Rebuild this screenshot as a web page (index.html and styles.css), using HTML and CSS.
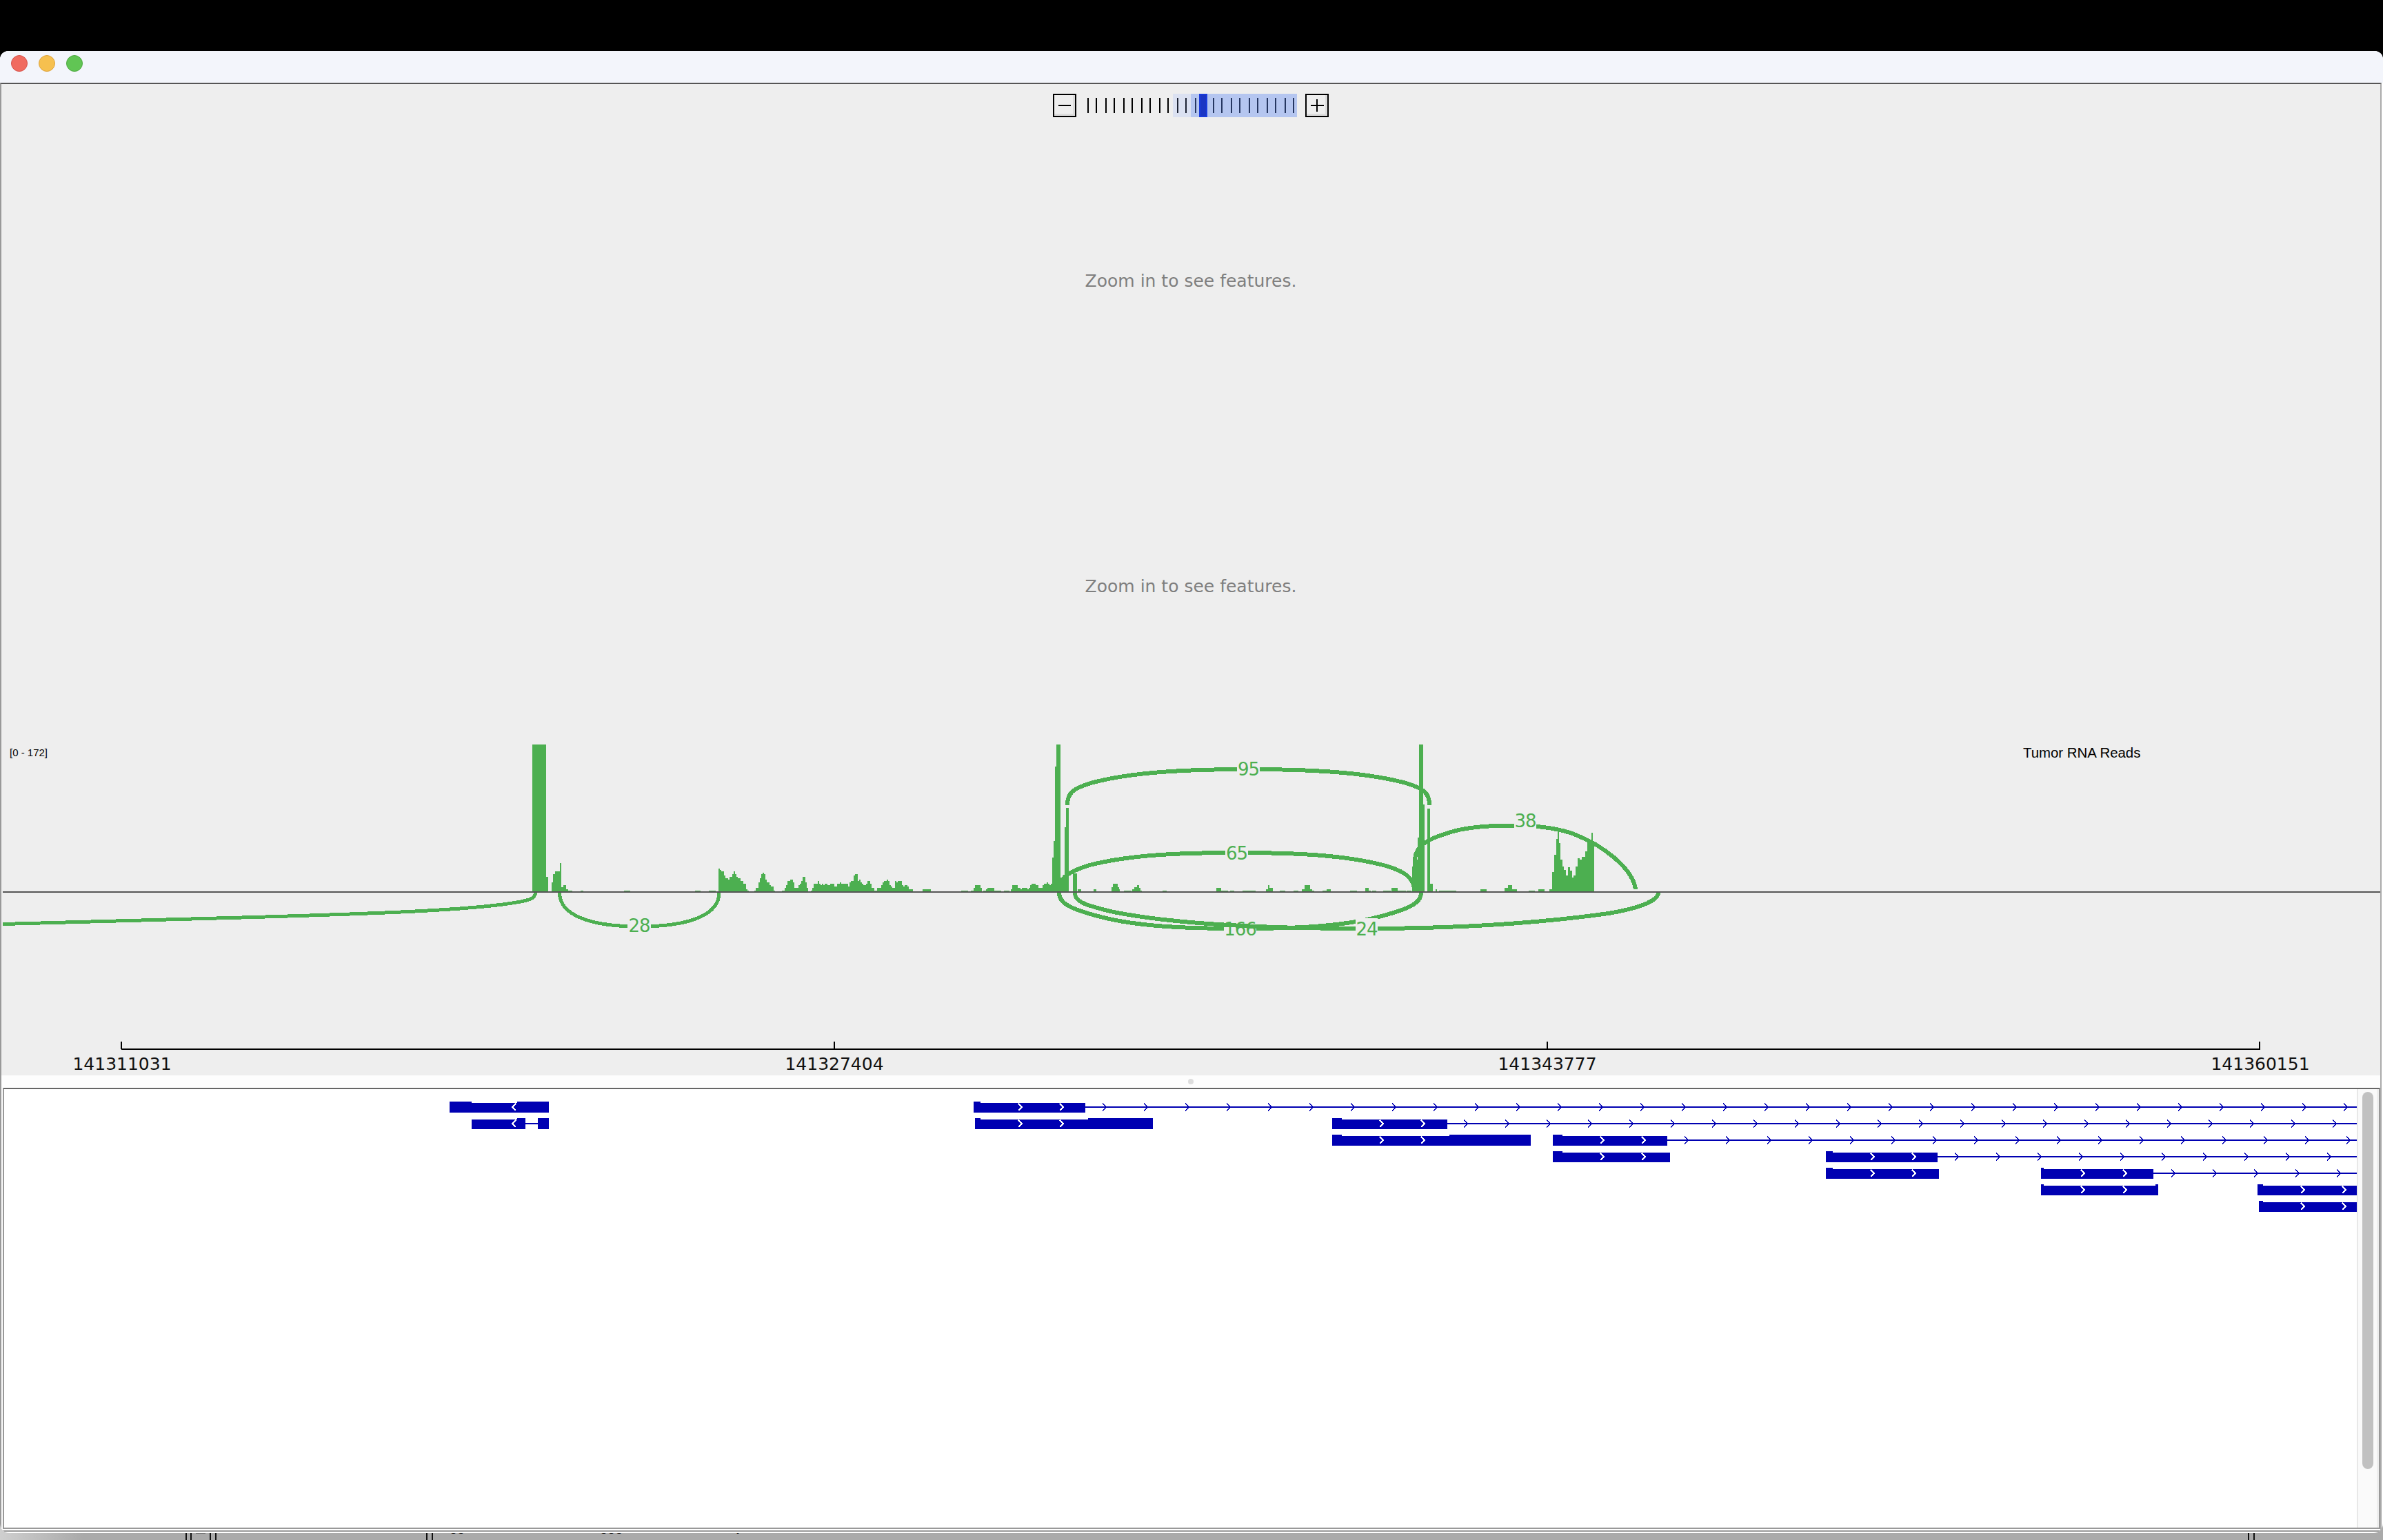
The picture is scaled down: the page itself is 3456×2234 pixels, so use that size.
FILE: index.html
```html
<!DOCTYPE html>
<html lang="en">
<head>
<meta charset="utf-8">
<title>IGV</title>
<link rel="stylesheet" href="styles.css">
</head>
<body>
<div class="screen">
  <div class="menubar"></div>
  <main class="window">
    <header class="titlebar">
      <span class="light red"></span>
      <span class="light yellow"></span>
      <span class="light green"></span>
    </header>
    <div class="content">
      <section class="tracks">
        <div class="zoomctl">
          <button class="zbtn" aria-label="Zoom out"><svg width="30" height="30" viewBox="0 0 30 30"><rect x="6" y="14" width="18" height="2"/></svg></button>
          <div class="slider">
            <div class="ticks">
              <i></i><i></i><i></i><i></i><i></i><i></i><i></i><i></i><i></i><i></i><i></i><i></i>
              <i></i><i></i><i></i><i></i><i></i><i></i><i></i><i></i><i></i><i></i><i></i><i></i>
            </div>
            <span class="hl-light"></span>
            <span class="hl-dark"></span>
            <span class="thumb"></span>
          </div>
          <button class="zbtn" aria-label="Zoom in"><svg width="30" height="30" viewBox="0 0 30 30"><rect x="6" y="14" width="19" height="2"/><rect x="14" y="6" width="2" height="18"/></svg></button>
        </div>
        <p class="notice first">Zoom in to see features.</p>
        <p class="notice second">Zoom in to see features.</p>
        <svg class="sashimi" width="3450" height="330" viewBox="2 1070 3450 330">
          <text class="range" x="14" y="1097">[0 - 172]</text>
          <text class="trackname" x="2934" y="1098.500">Tumor RNA Reads</text>
          <g class="cov">
            <path transform="translate(0 1060) scale(.7015 .33333)" d="M1100 700V60H1129V635H1133V700H1140V660H1143V625H1147V612H1157V576H1160V680H1165V672H1170V690H1175V696H1183V700H1200V696H1206V700H1290V696H1303V700H1437V696H1448V700H1465V696H1480V700Z"/>
            <path transform="translate(1030 1240) scale(.33333)" d="M0 160V155H24V160H36V60H42V66H48V72H60V90H66V102H78V108H84V96H96V84H102V72H108V84H114V96H120V102H132V114H144V126H156V150H162V156H168V160H192V156H198V144H210V120H216V102H222V84H228V78H234V84H240V108H246V120H258V132H264V138H276V156H282V160H312V156H324V144H330V132H336V114H348V108H360V120H366V144H384V132H390V126H396V114H402V96H414V120H420V144H426V160H438V156H444V144H450V126H468V114H474V126H480V132H486V126H492V132H498V126H510V132H522V126H540V138H552V126H564V120H570V126H600V138H606V120H612V114H624V90H630V84H642V114H648V108H654V120H660V126H666V132H678V126H684V114H696V126H702V144H714V156H726V144H744V132H750V120H756V114H768V108H774V114H780V132H786V138H792V144H804V114H810V120H816V114H834V132H840V138H846V132H858V138H864V150H882V160H924V150H960V160H1092V156H1122V160H1134V156H1146V144H1152V132H1176V144H1182V160H1188V156H1200V150H1206V144H1236V156H1266V160H1278V156H1302V160H1308V150H1314V132H1338V144H1350V150H1356V144H1380V150H1386V144H1392V132H1398V126H1416V132H1428V144H1446V132H1452V126H1464V120H1470V126H1476V132H1482V126H1488V12H1494V-60H1500V-384H1506V-480H1524V98H1530V95H1536V90H1542V-120H1548V-204H1560V160Z"/>
            <path transform="translate(1500 1060) scale(.38265 .33333)" d="M147 700V620H161V700H165V690H178V700H225V690H235V700H292V680H298V666H315V680H322V690H325V700H340V696H368V700H372V690H380V680H390V672H396V684H402V696H408V700H485V696H502V700H600V698H606V700H690V684H708V696H735V700H742V696H758V700H790V696H840V700H878V690H885V672H892V684H905V700H930V696H950V700H982V696H1002V700H1015V690H1025V672H1045V690H1052V696H1060V700H1092V696H1108V690H1125V700H1198V696H1222V700H1255V684H1268V696H1276V700H1280V696H1297V700H1322V696H1352V700H1354V684H1378V696H1408V700H1412V696H1430V700H1432V590H1440V560H1452V465H1458V60H1474V320H1480V700H1490V340H1500V665H1510V700H1520V690H1525V700H1535V696H1568V700Z"/>
            <path transform="translate(1400 1060) scale(.7015 .33333)" d="M985 700V696H1015V700H1065V690H1078V700H1115V684H1122V672H1130V690H1140V700H1165V696H1178V700H1185V690H1197V700H1208V690H1213V615H1217V540H1221V470H1224V440H1227V490H1230V560H1234V590H1238V605H1242V630H1246V595H1250V610H1254V640H1258V630H1262V590H1266V555H1270V560H1274V550H1282V525H1286V480H1294V445H1297V480H1300V700Z"/>
          </g>
          <g class="arc">
            <path d="M1548 1168C1548 1150 1556 1144 1582 1136C1640 1120 1720 1116 1810 1116C1900 1116 1980 1120 2039 1136C2065 1144 2073 1150 2073 1168"/>
            <path d="M1536 1290C1537 1275 1545 1266 1580 1255C1640 1240 1710 1237 1793.500 1237C1877 1237 1950 1240 2010 1256C2040 1265 2050 1275 2051 1290"/>
            <path d="M2052 1290V1246C2053 1228 2070 1217 2101 1208C2125 1200 2160 1197.500 2193 1197.500C2225 1197.500 2255 1201 2277 1208C2325 1225 2368 1260 2372 1290"/>
            <path class="thin" d="M776.500 1295C776 1303 770 1306 743 1310C680 1320 560 1325 351 1331C220 1335 100 1338 4 1340.500"/>
            <path class="thin" d="M811.500 1295C811.500 1325 850 1344 927 1344C1005 1344 1043 1325 1043 1295"/>
          </g>
          <g class="lab">
            <rect x="1794" y="1103" width="33" height="26"/><text x="1810.500" y="1124.500">95</text>
            <rect x="1777" y="1224" width="33" height="26"/><text x="1793.500" y="1246.500">65</text>
            <rect x="2196" y="1178" width="32" height="26"/><text x="2212" y="1200">38</text>
            <rect x="910" y="1331" width="34" height="26"/><text x="927" y="1352">28</text>
          </g>
          <g class="arc"><path class="wide" d="M1536 1295C1536 1310 1550 1318 1596 1330C1650 1344 1720 1347 1798 1347C1880 1347 1945 1344 2000 1330C2045 1318 2061 1310 2061 1295"/></g>
          <g class="lab"><rect x="1775" y="1333" width="47" height="28"/><text x="1798.500" y="1357">166</text></g>
          <g class="arc"><path d="M1559 1295C1559 1307 1568 1312 1615 1323C1690 1338 1800 1347 1982 1347C2120 1347 2240 1338 2333 1325C2385 1316 2405 1305 2405 1295"/></g>
          <g class="lab"><rect x="1966" y="1332" width="32" height="28"/><text x="1982" y="1357">24</text></g>
          <rect class="axis" x="4" y="1293" width="3448" height="2"/>
        </svg>
        <svg class="ruler" width="3450" height="60" viewBox="2 1500 3450 60">
          <rect x="176" y="1521" width="3102" height="2"/>
          <rect x="175" y="1511" width="2" height="11"/>
          <rect x="1209" y="1511" width="2" height="11"/>
          <rect x="2243" y="1511" width="2" height="11"/>
          <rect x="3276" y="1511" width="2" height="11"/>
          <text x="177" y="1552">141311031</text>
          <text x="1210" y="1552">141327404</text>
          <text x="2244" y="1552">141343777</text>
          <text x="3278" y="1552">141360151</text>
        </svg>
      </section>
      <div class="splitter"><span class="grip"></span></div>
      <section class="features">
        <svg class="genes" width="3412" height="634" viewBox="6 1582 3412 634">
          <defs>
            <pattern id="chev" patternUnits="userSpaceOnUse" width="60" height="14">
              <path class="bluechev" d="M3 1.500L8 7 3 12.500"/>
            </pattern>
            <path id="right" d="M-3-5L2 0-3 5"/>
            <path id="left" d="M2-5L-3 0 2 5"/>
          </defs>
          <g class="lines">
            <rect x="1574" y="1605" width="1844" height="2"/>
            <rect x="2098" y="1629" width="1320" height="2"/>
            <rect x="2418" y="1653" width="1000" height="2"/>
            <rect x="2810" y="1677" width="608" height="2"/>
            <rect x="3123" y="1701" width="295" height="2"/>
            <rect x="762" y="1629" width="18" height="2"/>
          </g>
          <g class="chevrows">
            <rect transform="translate(36 1599)" x="1538" y="0" width="1844" height="14"/>
            <rect transform="translate(20 1623)" x="2078" y="0" width="1320" height="14"/>
            <rect transform="translate(40 1647)" x="2378" y="0" width="1000" height="14"/>
            <rect transform="translate(12 1671)" x="2798" y="0" width="608" height="14"/>
            <rect transform="translate(26 1695)" x="3097" y="0" width="295" height="14"/>
          </g>
          <g class="blocks">
            <path d="M652 1598H684V1600H750V1598H796V1614H652Z"/>
            <path d="M684 1624H750V1622H762V1638H684Z"/>
            <path d="M780 1622H796V1638H780Z"/>
            <path d="M1412 1598H1422V1600H1574V1614H1412Z"/>
            <path d="M1414 1622H1422V1624H1578V1622H1672V1638H1414Z"/>
            <path d="M1932 1622H1946V1624H2099V1638H1932Z"/>
            <path d="M1932 1646H1946V1648H2102V1646H2220V1662H1932Z"/>
            <path d="M2252 1646H2266V1648H2418V1662H2252Z"/>
            <path d="M2252 1670H2266V1672H2422V1686H2252Z"/>
            <path d="M2648 1670H2658V1672H2810V1686H2648Z"/>
            <path d="M2648 1694H2658V1696H2812V1710H2648Z"/>
            <path d="M2960 1694H2964V1696H3123V1710H2960Z"/>
            <path d="M2960 1718H2964V1720H3126V1718H3130V1734H2960Z"/>
            <path d="M3274 1718H3282V1720H3418V1734H3274Z"/>
            <path d="M3276 1742H3282V1744H3418V1758H3276Z"/>
          </g>
          <g class="whites">
            <use href="#left" x="746" y="1606"/><use href="#left" x="746" y="1630"/>
            <use href="#right" x="1480" y="1606"/><use href="#right" x="1540" y="1606"/>
            <use href="#right" x="1480" y="1630"/><use href="#right" x="1540" y="1630"/>
            <use href="#right" x="2004" y="1630"/><use href="#right" x="2064" y="1630"/>
            <use href="#right" x="2004" y="1654"/><use href="#right" x="2064" y="1654"/>
            <use href="#right" x="2324" y="1654"/><use href="#right" x="2384" y="1654"/>
            <use href="#right" x="2324" y="1678"/><use href="#right" x="2384" y="1678"/>
            <use href="#right" x="2716" y="1678"/><use href="#right" x="2776" y="1678"/>
            <use href="#right" x="2716" y="1702"/><use href="#right" x="2776" y="1702"/>
            <use href="#right" x="3021" y="1702"/><use href="#right" x="3082" y="1702"/>
            <use href="#right" x="3021" y="1726"/><use href="#right" x="3082" y="1726"/>
            <use href="#right" x="3340" y="1726"/><use href="#right" x="3400" y="1726"/>
            <use href="#right" x="3340" y="1750"/><use href="#right" x="3400" y="1750"/>
          </g>
        </svg>
        <div class="scrollbar"><span class="scrollthumb"></span></div>
      </section>
    </div>
  </main>
  <footer class="behind">
    <div class="pane p1"></div>
    <div class="pane p2"><span class="square"></span></div>
    <div class="pane p3"><span class="frag f1">g g</span></div>
    <div class="pane p4"><span class="frag f2">gg</span><span class="frag f3">ggg</span><span class="frag f4">y</span></div>
    <div class="pane p5"></div>
  </footer>
</div>
</body>
</html>
```

FILE: styles.css
```css
* { box-sizing: border-box; }
html, body { margin: 0; padding: 0; background: #000; }
.screen {
  width: 3456px;
  height: 2234px;
  overflow: hidden;
  display: flex;
  flex-direction: column;
  background: #000;
}
.menubar { height: 74px; flex: none; background: #000; }

.window {
  position: relative;
  z-index: 1;
  height: 2150px;
  flex: none;
  display: flex;
  flex-direction: column;
  background: #fff;
  border-radius: 12px 12px 14px 14px;
  overflow: hidden;
}
.titlebar {
  height: 46px;
  flex: none;
  display: flex;
  align-items: center;
  gap: 16px;
  padding: 0 0 10px 16px;
  background: #f3f5fb;
}
.light { width: 24px; height: 24px; border-radius: 50%; border: 1px solid; }
.red { background: #f06b60; border-color: #d5524a; }
.yellow { background: #f6c04f; border-color: #dca23c; }
.green { background: #61c554; border-color: #4da83f; }

.content {
  height: 2102px;
  margin-right: 2px;
  border-top: 2px solid #555;
  border-left: 2px solid #999;
  border-right: 2px solid #aaa;
  border-bottom: 2px solid #999;
  display: flex;
  flex-direction: column;
  padding-bottom: 2px;
}
.tracks {
  height: 1438px;
  flex: none;
  background: #eee;
  display: flex;
  flex-direction: column;
}
.tracks svg { display: block; flex: none; }

.zoomctl {
  margin: 14px auto 0;
  width: 400px;
  height: 34px;
  display: flex;
  flex: none;
}
.zbtn {
  width: 34px;
  height: 34px;
  padding: 0;
  flex: none;
  background: #eee;
  border: 2px solid #000;
  box-shadow: inset -3px -3px 0 #dcdcdc;
  display: block;
}
.zbtn svg { display: block; fill: #000; shape-rendering: crispEdges; }
.slider { position: relative; flex: 1; }
.ticks { display: flex; align-items: center; height: 34px; padding-left: 4px; }
.ticks i { display: block; width: 2px; height: 22px; background: #000; margin-left: 12px; flex: none; }
.ticks i:nth-child(even) { margin-left: 10px; }
.hl-light { position: absolute; left: 140px; top: 0; width: 26px; height: 34px; background: rgba(143, 173, 255, .2); }
.hl-dark { position: absolute; left: 166px; top: 0; width: 154px; height: 34px; background: rgba(95, 138, 243, .4); }
.thumb { position: absolute; left: 178px; top: 0; width: 12px; height: 34px; background: #1b36c4; border: 2px solid #1a3cdc; }

.notice {
  margin: 0;
  height: 40px;
  text-align: center;
  flex: none;
  color: #7f7f7f;
  font: 25px/40px "DejaVu Sans", sans-serif;
}
.notice.first { margin-top: 218px; }
.notice.second { margin-top: 403px; }

.sashimi { margin-top: 199px; shape-rendering: crispEdges; }
.range, .trackname { font-family: "Liberation Sans", Arial, sans-serif; fill: #000; }
.range { font-size: 15px; }
.trackname { font-size: 20.400px; }
.cov { fill: #4caf50; }
.arc path { fill: none; stroke: #4caf50; stroke-width: 6; }
.arc path.thin { stroke-width: 5; }
.arc path.wide { stroke-width: 6; }
.lab rect { fill: #eee; }
.lab text {
  fill: #4caf50;
  font: 26px "DejaVu Sans", sans-serif;
  letter-spacing: -1px;
  text-anchor: middle;
}
.axis { fill: #555; }

.ruler { margin-top: 100px; shape-rendering: crispEdges; }
.ruler rect { fill: #000; }
.ruler text {
  fill: #111;
  font: 25px "DejaVu Sans", sans-serif;
  text-anchor: middle;
}

.splitter {
  height: 18px;
  flex: none;
  background: #fdfdfd;
  display: flex;
  align-items: center;
  justify-content: center;
}
.grip { width: 8px; height: 8px; border-radius: 50%; background: #ddd; }

.features {
  height: 640px;
  flex: none;
  margin-left: 2px;
  border-top: 2px solid #666;
  border-left: 2px solid #999;
  border-right: 2px solid #999;
  border-bottom: 2px solid #999;
  display: flex;
  align-items: flex-start;
  background: #fff;
}
.genes {
  display: block;
  flex: none;
  margin-top: 2px;
  shape-rendering: crispEdges;
}
.blocks, .lines { fill: #0000b2; }
.chevrows { fill: url(#chev); }
.bluechev { fill: none; stroke: #0000b2; stroke-width: 1.500; }
.whites { fill: none; stroke: #fff; stroke-width: 1.500; }

.scrollbar {
  width: 32px;
  height: 636px;
  flex: none;
  background: #fafafa;
  border-left: 2px solid #e8e8e8;
  border-right: 3px solid #eee;
  padding: 4px 0 0 6px;
}
.scrollthumb {
  display: block;
  width: 16px;
  height: 547px;
  border-radius: 8px;
  background: #c1c1c1;
}

.behind {
  margin-top: -14px;
  height: 24px;
  flex: none;
  display: flex;
  background: linear-gradient(90deg, #cfcfcf 0, #aaa 120px);
}
.pane {
  position: relative;
  height: 24px;
  flex: none;
  border-left: 2px solid #111;
  border-right: 2px solid #111;
}
.p1 { width: 271px; border-left: 0; }
.p2 { width: 30px; margin-left: 5px; }
.p3 { width: 308px; margin-left: 6px; }
.p4 { width: 2636px; margin-left: 6px; }
.p5 { flex: 1; margin-left: 6px; border-right: 0; }
.square { position: absolute; left: 6px; top: 9px; width: 14px; height: 6px; background: #777; }
.frag {
  position: absolute;
  top: -8px;
  color: #222;
  font: 20px/24px "Liberation Sans", Arial, sans-serif;
}
.f1 { left: 88px; letter-spacing: 20px; font-size: 8px; }
.f2 { left: 24px; }
.f3 { left: 242px; }
.f4 { left: 440px; }
```
